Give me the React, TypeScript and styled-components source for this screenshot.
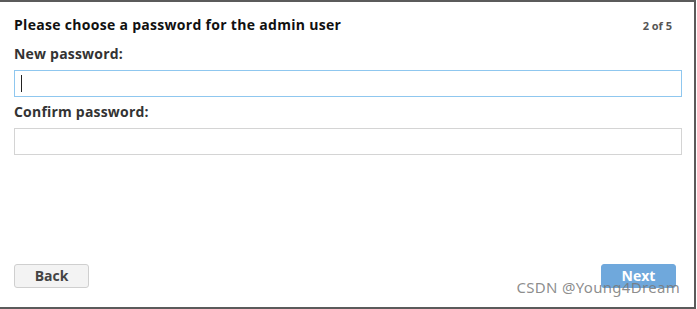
import React from "react";
import styled, { createGlobalStyle } from "styled-components";

const Global = createGlobalStyle`
  html, body { margin: 0; padding: 0; background: #ffffff; }
  * { box-sizing: border-box; }
`;

const Panel = styled.div`
  position: relative;
  width: 696px;
  height: 309px;
  border-top: 2px solid #5b5b5b;
  border-right: 2px solid #5b5b5b;
  border-bottom: 2px solid #5b5b5b;
  padding: 13px 12px 19px 14px;
  display: flex;
  flex-direction: column;
  font-family: "Open Sans", Lato, sans-serif;
  background: #fff;
`;

const Header = styled.div`
  display: flex;
  justify-content: space-between;
  align-items: baseline;
  padding-right: 10px;
`;

const Title = styled.h1`
  margin: 0;
  font-size: 14px;
  line-height: 20px;
  font-weight: 700;
  letter-spacing: 0.3px;
  color: #111;
`;

const Step = styled.span`
  font-size: 11px;
  font-weight: 700;
  color: #555;
`;

const Label = styled.label<{ $top: number }>`
  display: block;
  margin-top: ${(p) => p.$top}px;
  font-size: 14px;
  line-height: 20px;
  font-weight: 700;
  letter-spacing: 0.2px;
  color: #333;
`;

const Field = styled.input<{ $focused?: boolean }>`
  display: block;
  width: 668px;
  height: 27px;
  margin-top: 6px;
  padding: 0 6px;
  border: 1px solid ${(p) => (p.$focused ? "#8fc7ef" : "#d4d4d4")};
  border-radius: 0;
  outline: none;
  background: #fff;
  font-size: 14px;
`;

const Caret = styled.span`
  position: absolute;
  left: 7px;
  top: 11px;
  width: 1px;
  height: 17px;
  background: #222;
`;

const FieldWrap = styled.div`
  position: relative;
  width: 668px;
`;

const Footer = styled.div`
  margin-top: auto;
  display: flex;
  justify-content: space-between;
  padding-right: 6px;
`;

const Button = styled.button<{ $primary?: boolean }>`
  width: 75px;
  height: 24px;
  border-radius: 3px;
  border: 1px solid ${(p) => (p.$primary ? "#6fa8dc" : "#cfcfcf")};
  background: ${(p) => (p.$primary ? "#6fa8dc" : "#f3f3f3")};
  color: ${(p) => (p.$primary ? "#ffffff" : "#444")};
  font-family: "Open Sans", Lato, sans-serif;
  font-size: 14px;
  font-weight: 700;
  padding: 0;
  line-height: 22px;
`;

const Watermark = styled.div`
  position: absolute;
  right: 14px;
  bottom: 10px;
  font-family: "Noto Sans", "Noto Sans CJK SC", sans-serif;
  font-size: 15px;
  letter-spacing: 0.3px;
  color: rgba(120, 120, 120, 0.85);
  pointer-events: none;
`;

export default function App() {
  return (
    <>
      <Global />
      <Panel>
        <Header>
          <Title>Please choose a password for the admin user</Title>
          <Step>2 of 5</Step>
        </Header>
        <Label $top={9}>New password:</Label>
        <FieldWrap>
          <Field type="password" $focused />
          <Caret />
        </FieldWrap>
        <Label $top={5}>Confirm password:</Label>
        <Field type="password" />
        <Footer>
          <Button>Back</Button>
          <Button $primary>Next</Button>
        </Footer>
        <Watermark>CSDN @Young4Dream</Watermark>
      </Panel>
    </>
  );
}
